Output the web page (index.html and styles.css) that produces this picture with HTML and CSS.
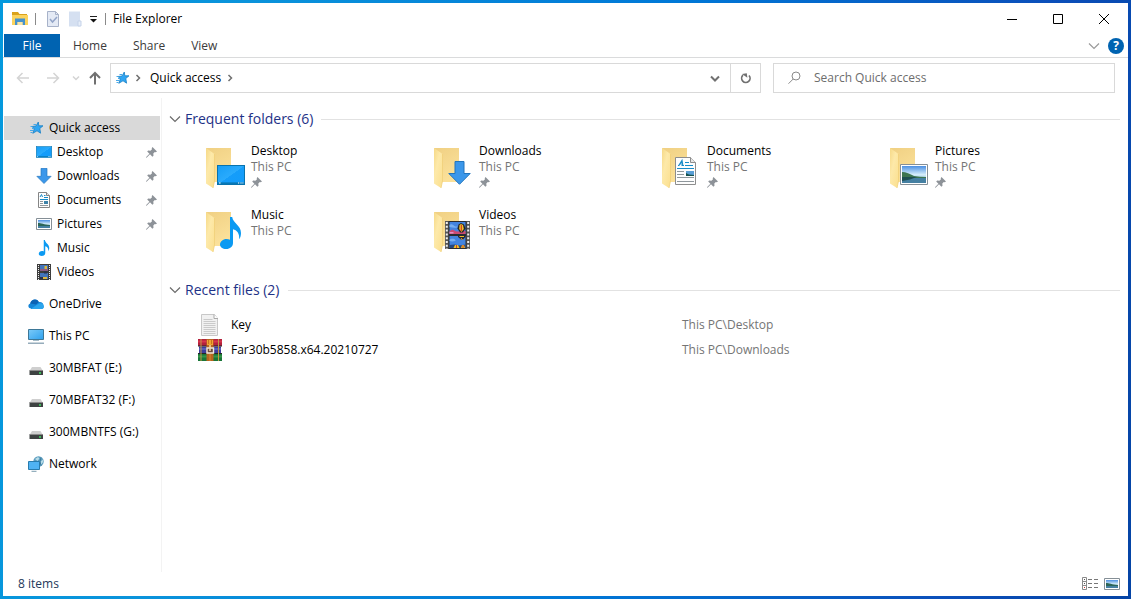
FILE: index.html
```
<!DOCTYPE html>
<html lang="en">
<head>
<meta charset="utf-8">
<title>File Explorer</title>
<link rel="stylesheet" href="styles.css">
</head>
<body>
<svg class="defs" aria-hidden="true">
  <defs>
    <linearGradient id="g-flap" x1="0" y1="0" x2="1" y2="1"><stop offset="0" stop-color="#f6d987"/><stop offset=".4" stop-color="#fde9a9"/><stop offset="1" stop-color="#fbdf8e"/></linearGradient>
    <linearGradient id="g-back" x1="0" y1="0" x2=".4" y2="1"><stop offset="0" stop-color="#f0d083"/><stop offset="1" stop-color="#fbe19a"/></linearGradient>
    <linearGradient id="g-desk" x1="0" y1="0" x2="1" y2="1"><stop offset="0" stop-color="#159df6"/><stop offset=".5" stop-color="#2aabfd"/><stop offset=".51" stop-color="#159dfa"/><stop offset="1" stop-color="#139cfb"/></linearGradient>
    <linearGradient id="g-sky" x1="0" y1="0" x2="0" y2="1"><stop offset="0" stop-color="#4b8fe2"/><stop offset=".5" stop-color="#d3ecfa"/><stop offset="1" stop-color="#78b5d4"/></linearGradient>
    <linearGradient id="g-screen" x1="0" y1="0" x2="1" y2="1"><stop offset="0" stop-color="#7ccbf8"/><stop offset="1" stop-color="#2da0ee"/></linearGradient>
    <symbol id="desktop" viewBox="0 0 28 20"><rect x=".5" y=".5" width="27" height="19" fill="url(#g-desk)" stroke="#0873ae"/><path d="M1 18.2h26" stroke="#0877b5" stroke-width="1.6"/><path d="M2 18h1.6M21 18h1.2M23.4 18h1.2M25.4 18h1" stroke="#fff" stroke-width="1.2"/></symbol>
    <symbol id="down" viewBox="0 0 23 24"><path d="M7 .5h9v12h6.2L11.500 23.300.8 12.500H7z" fill="#3b97ea" stroke="#2275bd"/></symbol>
    <symbol id="music" viewBox="0 0 21 32"><path d="M10 0h2.200c.8 6.500 8.800 8 8.800 16 0 2.500-.6 4.600-1.800 6.300.5-6-2.400-9.200-6.200-10V26c0 3.500-3 6-6.800 6C2.500 32 0 30.200 0 27.500 0 24.500 3 22 6.500 22c1.400 0 2.600.3 3.500.8z" fill="#0b9af2"/></symbol>
    <symbol id="film" viewBox="0 0 25 28"><path d="M0 0h25v28H0z" fill="#555"/><path d="M3.500 0h18v28h-18z" fill="#2b2d30"/><path d="M1.800 1v27M23.200 1v27" stroke="#eee" stroke-width="2" stroke-dasharray="2 1.800"/><path d="M4.500 1h16v12h-16zM4.500 15h16v12h-16z" fill="#4384df"/><path d="M4.500 4c2-2 4 0 5 1s3 0 3 1-5 1-8 0zM4.500 19c2-2 5-1 6 0s-3 2-6 1z" fill="#77aef0"/><path d="M4.500 10l3-1.500 4 2 9-.5v3h-16z" fill="#cb4b73"/><path d="M4.500 11h4v1.500h-4z" fill="#e390c5"/><path d="M13.500 3.500L16 2l3 1.500 1.500 4-2.500 4h-3l-2.500-4z" fill="#232629"/><path d="M14.500 4L16 3l2 1 .8 4-2.300 3-2.300-3z" fill="#f2c22d"/><path d="M16.300 4v6" stroke="#cf2b20"/><path d="M13 14h7.500v2l-2.500 2.500h-2L13 16z" fill="#242735"/><path d="M14.500 15.500h4.500" stroke="#f1c126"/><path d="M16 17l1.500 2" stroke="#ee9b22"/><path d="M4.500 24l5-.5 5 1 6-1V27h-16z" fill="#27477e"/><path d="M8.500 27l1.500-3h3l1.500 3zM16 27l1-3h2l1 3z" fill="#f1c126"/><path d="M11.500 24v3M18 24v3" stroke="#c94429"/></symbol>
    <symbol id="film-small" viewBox="0 0 16 16"><path d="M1 0h14v16H1z" fill="#3d3d3d"/><path d="M2.500 1v15M13.500 1v15" stroke="#f0f0f0" stroke-dasharray="1 1"/><path d="M4 1h8v6H4zM4 9h8v6H4z" fill="#4374bb"/><path d="M4 5h8v2H4z" fill="#8a5a85"/><path d="M8.500 2h2.500v3H8.500zM7 13h4v2H7z" fill="#dcb640"/><path d="M8 7.500h3v2H8zM4 13h3v2H4z" fill="#29324b"/></symbol>
    <symbol id="document" viewBox="0 0 21 28"><path d="M.5.500h15l5 5v22H.500z" fill="#fdfdfd" stroke="#8d8d8d"/><path d="M15.500.500v5h5" fill="#e6e6e6" stroke="#8d8d8d"/><path d="M3 8.500h1.500M6.500 8.500H9M3.800 8.500L7 3.500l.8 5M5 7h2.500" fill="none" stroke="#178bc8" stroke-width="1.200"/><path d="M10 5.500h4M10 8.500h8M2 11.500h17" stroke="#178bc8"/><path d="M2 14.500h7M2 17.500h7M2 20.500h17M2 24.500h17" stroke="#8f979c"/><path d="M11 14h8v5h-8z" fill="#5a9fd6"/><path d="M11 19v-3l3 1.500 5 .5v1z" fill="#17524e"/></symbol>
    <symbol id="document-small" viewBox="0 0 16 16"><path d="M2.500.500h8l3 3v12h-11z" fill="#fdfdfd" stroke="#858585"/><path d="M10.500.500v3h3" fill="#e6e6e6" stroke="#858585"/><path d="M4 5l1.500-2.500L6.500 5M8 3.500h1.500M8 5.500h4M4 7.500h8" fill="none" stroke="#178bc8"/><path d="M4 9.500h3M4 11.500h3M4 13.500h8" stroke="#8f979c"/><path d="M8 9h4v3H8z" fill="#3c82a8"/></symbol>
    <symbol id="picture" viewBox="0 0 28 21"><path d="M.5.500h27v20H.500z" fill="#fff" stroke="#858f96"/><path d="M2 2h24v17H2z" fill="url(#g-sky)"/><path d="M2 8c4 0 8 2 12 4 4 .5 8 1 12 1v1H2z" fill="#3c7550"/><path d="M2 14h24v5H2z" fill="#4580a2"/><path d="M2 13h15l-7 2.500L2 17z" fill="#1d4f52"/></symbol>
    <symbol id="picture-small" viewBox="0 0 16 16"><path d="M.5 2.500h15v11H.500z" fill="#fff" stroke="#858f96"/><path d="M2 4h12v8H2z" fill="url(#g-sky)"/><path d="M2 7c3 0 6 1.500 12 2v1H2z" fill="#2c6658"/><path d="M2 10h12v2H2z" fill="#4580a2"/></symbol>
    <symbol id="folder" viewBox="0 0 42 42"><path d="M1 1h25v34H9z" fill="url(#g-back)"/><path d="M1 1l8.500 6v27L8 41 1 36.500z" fill="url(#g-flap)"/><path d="M9.500 7v27L8 41" fill="none" stroke="#f0cf78" stroke-width=".8"/></symbol>
    <symbol id="pin" viewBox="0 0 11 11"><path d="M6.500 0L11 4.500 9.700 5.300 8.800 5 7.300 6.600 7.500 8.700 6.400 9.700 4 7.300.6 10.800 0 10.500.2 9.900 3.400 6.800 1.200 4.500 2.200 3.500 4.400 3.700 6 2.200 5.700 1.200z" fill="#8d9298"/></symbol>
    <symbol id="star" viewBox="0 0 16 16"><path d="M10.300 2l.5 3.800h4.200L11.800 8.500l.8 4.700-3.600-2.400-4.200 2.500 1.500-4.500L4 6.500l4-.5z" fill="#2fa5f2" stroke="#1a80c4" stroke-width=".8"/><path d="M5.500 4.500H8M2.500 6.500h2M4 8.500h2M2 10.500h3M2.500 12.500h2" stroke="#48a8e8"/></symbol>
    <symbol id="cloud" viewBox="0 0 16 16"><path d="M3 12.500C0 12.500-.6 8.800 2.200 7.600 3.200 3 9 2 10.800 6c3-.5 4.700 1.300 4.600 3.500C16.400 11 15.500 13 13.500 13H3z" fill="#1485d8"/><path d="M2.200 7.600C3.200 3 9 2 10.800 6L8 8.500z" fill="#0b62b4"/><path d="M3 12.700L11 7.500c3-1 5 .8 4.700 3.200-.2 1.300-1 2.300-2.200 2.300H3.800z" fill="#2ba5ed"/></symbol>
    <symbol id="pc" viewBox="0 0 16 16"><path d="M.5 1.500h15v10H.500z" fill="url(#g-screen)" stroke="#3d7797"/><path d="M5 12.500h6" stroke="#a7bdc9"/><path d="M0 15.200h16" stroke="#7c98aa" stroke-width="1.200"/></symbol>
    <symbol id="drive" viewBox="0 0 16 16"><path d="M4 7h8.500L15 11H1.500z" fill="#cfcfcf"/><path d="M1.500 10.500h13.500v4.500H1.500z" fill="#3e4242"/><path d="M1.500 10.500h13.500" stroke="#8b8b8b"/><path d="M11 13h2" stroke="#3fe063" stroke-width="1.600"/></symbol>
    <symbol id="network" viewBox="0 0 16 16"><circle cx="10.500" cy="5.500" r="5.200" fill="#5b9dbf"/><path d="M7 3l3-2 1.500 1.500-2 2.500zM12.500 6l2-2.500.8 2-1.800 3z" fill="#b8dce8"/><path d="M13 1.500l-1 4 1 4" fill="none" stroke="#3f7c9c"/><path d="M.5 5.500h11v8H.500z" fill="#4fb3f4" stroke="#287cae"/><path d="M3.500 15.300h5" stroke="#7a9bad"/></symbol>
    <symbol id="chev" viewBox="0 0 12 12"><path d="M1 3.500l5 5 5-5" fill="none" stroke="currentColor" stroke-width="1.200"/></symbol>
    <symbol id="caret" viewBox="0 0 12 12"><path d="M2 4.500l4 4 4-4" fill="none" stroke="currentColor" stroke-width="2"/></symbol>
    <symbol id="next" viewBox="0 0 12 12"><path d="M4.500 3l3 3-3 3" fill="none" stroke="currentColor" stroke-width="1.500"/></symbol>
  </defs>
</svg>

<div class="window">
  <header class="titlebar">
    <svg class="i16" viewBox="0 0 16 16" aria-hidden="true"><path d="M0 1h6l1.500 2H15v3H0z" fill="#daa21c"/><path d="M0 4h16v10H0z" fill="#fbd35e"/><path d="M3 14V7.500h10V14h-2.500v-3h-5v3z" fill="#4592cd"/><path d="M5.500 14v-3h5v3z" fill="#f8e5a9"/></svg>
    <span class="divider"></span>
    <button class="tool tool-first" aria-label="Properties"><svg class="i16" viewBox="0 0 16 16"><path d="M2.500.500h8l3 3v12h-11z" fill="#e4eaf5" stroke="#a7b2c9"/><path d="M10.500.500v3h3" fill="none" stroke="#a7b2c9"/><path d="M5 8l2.500 3L12 6" fill="none" stroke="#93a5c8" stroke-width="1.500"/></svg></button>
    <button class="tool" aria-label="New folder"><svg class="i16" viewBox="0 0 16 16"><path d="M2 .5h11v15H2z" fill="#d5e0f1"/><path d="M11 10h3v5h-3z" fill="#e7eef9" stroke="#c5d3e9"/></svg></button>
    <button class="tool tool-small" aria-label="Customize toolbar"><svg class="i8" viewBox="0 0 8 8"><path d="M0 1.500h7" stroke="#222"/><path d="M0 4h7L3.500 7.500z" fill="#111"/></svg></button>
    <span class="divider"></span>
    <h1 class="title">File Explorer</h1>
    <div class="controls">
      <button class="control" aria-label="Minimize"><svg class="i12" viewBox="0 0 12 12"><path d="M1 6.500h10" stroke="#000"/></svg></button>
      <button class="control" aria-label="Maximize"><svg class="i12" viewBox="0 0 12 12"><path d="M1.500 1.500h9v9h-9z" fill="none" stroke="#000"/></svg></button>
      <button class="control" aria-label="Close"><svg class="i12" viewBox="0 0 12 12"><path d="M1 1l10 10M11 1L1 11" stroke="#000"/></svg></button>
    </div>
  </header>

  <div class="ribbon">
    <button class="tab tab-file">File</button>
    <button class="tab">Home</button>
    <button class="tab">Share</button>
    <button class="tab">View</button>
    <div class="ribbon-end">
      <button class="plain pale" aria-label="Expand the ribbon"><svg class="i12"><use href="#chev"/></svg></button>
      <button class="help" aria-label="Help">?</button>
    </div>
  </div>

  <div class="navbar">
    <div class="history">
      <button class="plain off" aria-label="Back"><svg class="i14" viewBox="0 0 14 14"><path d="M13 7H1.500M6.500 2l-5 5 5 5" fill="none" stroke="currentColor" stroke-width="1.500"/></svg></button>
      <button class="plain off" aria-label="Forward"><svg class="i14" viewBox="0 0 14 14"><path d="M1 7h11.500M7.500 2l5 5-5 5" fill="none" stroke="currentColor" stroke-width="1.500"/></svg></button>
      <button class="plain off history-drop" aria-label="Recent locations"><svg class="i8" viewBox="0 0 8 8"><path d="M1 2.500l3 3 3-3" fill="none" stroke="currentColor" stroke-width="1.500"/></svg></button>
      <button class="plain" aria-label="Up"><svg class="i14" viewBox="0 0 14 14"><path d="M7 13.500V2M2 7l5-5 5 5" fill="none" stroke="currentColor" stroke-width="2"/></svg></button>
    </div>
    <div class="address">
      <svg class="i16" aria-hidden="true"><use href="#star"/></svg>
      <svg class="i12" aria-hidden="true"><use href="#next"/></svg>
      <a class="crumb" href="#">Quick access</a>
      <svg class="i12" aria-hidden="true"><use href="#next"/></svg>
      <button class="plain address-drop" aria-label="Previous locations"><svg class="i12"><use href="#caret"/></svg></button>
      <button class="plain refresh" aria-label="Refresh"><svg class="i14" viewBox="0 0 14 14"><path d="M4 4.200a4.200 4.200 0 1 0 6 .3" fill="none" stroke="currentColor" stroke-width="1.700"/><path d="M3.200 2.500H8V7z" fill="currentColor" transform="rotate(-8 6 4)"/></svg></button>
    </div>
    <div class="search">
      <svg class="i14" viewBox="0 0 14 14" aria-hidden="true"><circle cx="8" cy="5" r="4" fill="none" stroke="#8a8a8a"/><path d="M5.200 8L.5 12.700" stroke="#8a8a8a"/></svg>
      <input class="search-input" type="text" aria-label="Search Quick access" placeholder="Search Quick access">
    </div>
  </div>

  <div class="body">
    <nav class="sidebar" aria-label="Folders">
      <a class="node selected" href="#"><svg class="i16"><use href="#star"/></svg>Quick access</a>
      <a class="node child" href="#"><svg class="i16"><use href="#desktop"/></svg>Desktop<svg class="pin"><use href="#pin"/></svg></a>
      <a class="node child" href="#"><svg class="i16"><use href="#down"/></svg>Downloads<svg class="pin"><use href="#pin"/></svg></a>
      <a class="node child" href="#"><svg class="i16"><use href="#document-small"/></svg>Documents<svg class="pin"><use href="#pin"/></svg></a>
      <a class="node child" href="#"><svg class="i16"><use href="#picture-small"/></svg>Pictures<svg class="pin"><use href="#pin"/></svg></a>
      <a class="node child" href="#"><svg class="i16"><use href="#music"/></svg>Music</a>
      <a class="node child" href="#"><svg class="i16"><use href="#film-small"/></svg>Videos</a>
      <a class="node root" href="#"><svg class="i16"><use href="#cloud"/></svg>OneDrive</a>
      <a class="node root" href="#"><svg class="i16"><use href="#pc"/></svg>This PC</a>
      <a class="node root" href="#"><svg class="i16"><use href="#drive"/></svg>30MBFAT (E:)</a>
      <a class="node root" href="#"><svg class="i16"><use href="#drive"/></svg>70MBFAT32 (F:)</a>
      <a class="node root" href="#"><svg class="i16"><use href="#drive"/></svg>300MBNTFS (G:)</a>
      <a class="node root" href="#"><svg class="i16"><use href="#network"/></svg>Network</a>
    </nav>

    <main class="content">
      <section class="group">
        <h2 class="group-head"><svg class="i12"><use href="#chev"/></svg>Frequent folders (6)</h2>
        <div class="tiles">
          <a class="tile" href="#"><svg class="tile-icon" viewBox="0 0 42 42"><use href="#folder" width="42" height="42"/><use href="#desktop" x="12" y="18" width="28" height="20"/></svg><span class="tile-text"><span>Desktop</span><span class="muted">This PC</span><svg class="pin"><use href="#pin"/></svg></span></a>
          <a class="tile" href="#"><svg class="tile-icon" viewBox="0 0 42 42"><use href="#folder" width="42" height="42"/><use href="#down" x="15" y="14" width="23" height="24"/></svg><span class="tile-text"><span>Downloads</span><span class="muted">This PC</span><svg class="pin"><use href="#pin"/></svg></span></a>
          <a class="tile" href="#"><svg class="tile-icon" viewBox="0 0 42 42"><use href="#folder" width="42" height="42"/><use href="#document" x="14" y="10" width="21" height="28"/></svg><span class="tile-text"><span>Documents</span><span class="muted">This PC</span><svg class="pin"><use href="#pin"/></svg></span></a>
          <a class="tile" href="#"><svg class="tile-icon" viewBox="0 0 42 42"><use href="#folder" width="42" height="42"/><use href="#picture" x="11" y="17" width="28" height="21"/></svg><span class="tile-text"><span>Pictures</span><span class="muted">This PC</span><svg class="pin"><use href="#pin"/></svg></span></a>
          <a class="tile" href="#"><svg class="tile-icon" viewBox="0 0 42 42"><use href="#folder" width="42" height="42"/><use href="#music" x="15" y="6" width="21" height="32"/></svg><span class="tile-text"><span>Music</span><span class="muted">This PC</span></span></a>
          <a class="tile" href="#"><svg class="tile-icon" viewBox="0 0 42 42"><use href="#folder" width="42" height="42"/><use href="#film" x="12" y="10" width="25" height="28"/></svg><span class="tile-text"><span>Videos</span><span class="muted">This PC</span></span></a>
        </div>
      </section>

      <section class="group">
        <h2 class="group-head"><svg class="i12"><use href="#chev"/></svg>Recent files (2)</h2>
        <table class="files">
          <tbody>
            <tr>
              <td class="file-icon"><svg class="i24" viewBox="0 0 24 24" aria-hidden="true"><path d="M3.500 1.500h13l3 4v17h-16z" fill="#f1f1f1" stroke="#c8c8c8"/><path d="M16 1.500v4h4" fill="#fff" stroke="#a9a9a9"/><path d="M5.500 6.500h9M5.500 8.500h12M5.500 10.500h12M5.500 12.500h12M5.500 14.500h12M5.500 16.500h12M5.500 18.500h12M5.500 20.500h12" stroke="#cacaca"/></svg></td>
              <td class="file-name">Key</td>
              <td class="muted">This PC\Desktop</td>
            </tr>
            <tr>
              <td class="file-icon"><svg class="i24" viewBox="0 0 24 24" aria-hidden="true"><path d="M0 1h24v7H0z" fill="#b3213c"/><path d="M0 3.500h24" stroke="#d8354d" stroke-width="2"/><path d="M1 8.500h22v7H1z" fill="#3d3d9b"/><path d="M1 11h22" stroke="#565cb8" stroke-width="2"/><path d="M0 16h24v7H0z" fill="#187638"/><path d="M0 18.500h24" stroke="#369548" stroke-width="2"/><path d="M0 8h24M0 15.500h24" stroke="#252525"/><path d="M3 1v22M20.500 1v22" stroke="#c29a44"/><path d="M8.500 1h7v22h-7z" fill="#b8651f"/><path d="M9 2h6v5H9z" fill="#f0a531"/><path d="M10.500 2v4M13.500 2v4" stroke="#c87420"/><path d="M12 16v7" stroke="#d98a35"/><path d="M9 10h6.500v5H9z" fill="#6e4937" stroke="#eee7dc" stroke-width="1.400"/><path d="M12 7v6" stroke="#f0d9ac" stroke-width="1.500"/></svg></td>
              <td class="file-name">Far30b5858.x64.20210727</td>
              <td class="muted">This PC\Downloads</td>
            </tr>
          </tbody>
        </table>
      </section>
    </main>
  </div>

  <footer class="status">
    <span class="status-count">8 items</span>
    <div class="views">
      <button class="plain" aria-label="Details view"><svg class="i16" viewBox="0 0 16 16"><path d="M.5 1.500h4v12h-4zM.5 5.500h4M.5 9.500h4" fill="#fff" stroke="#8a8a8a"/><path d="M2 3.500h1M2 7.500h1" stroke="#555"/><path d="M2 11.500h1" stroke="#c33"/><path d="M6 3.500h4M12 3.500h4M6 7.500h4M12 7.500h4M6 11.500h4M12 11.500h4" stroke="#777"/></svg></button>
      <button class="plain" aria-label="Large icons view"><svg class="i16"><use href="#picture-small"/></svg></button>
    </div>
  </footer>
</div>
</body>
</html>
```
FILE: styles.css
```
* { box-sizing: border-box; }

body {
  margin: 0;
  min-height: 100vh;
  padding: 3px;
  display: flex;
  background: linear-gradient(100deg, #0499dd 0%, #0a93db 20%, #0078d7 55%, #0b4fba 85%, #0544a5 100%);
  color: #000;
  font: 12px/16px "Open Sans", "Noto Sans", sans-serif;
}

button, input { font: inherit; color: inherit; border: 0; padding: 0; background: none; }
a { color: inherit; text-decoration: none; }
svg { display: block; flex: none; }

.defs { position: absolute; width: 0; height: 0; }
.i8 { width: 8px; height: 8px; }
.i12 { width: 12px; height: 12px; }
.i14 { width: 14px; height: 14px; }
.i16 { width: 16px; height: 16px; }
.i24 { width: 24px; height: 24px; }
.pin { width: 11px; height: 11px; }
.muted { color: #757575; }
.plain { display: flex; align-items: center; justify-content: center; color: #707070; }
.off { color: #d4d4d4; }
.pale { color: #9a9a9a; }

.window { flex: 1; display: flex; flex-direction: column; background: #fff; }

.titlebar { display: flex; align-items: center; height: 31px; padding: 0 1px 0 9px; }
.divider { width: 1px; height: 12px; margin: 0 7px; background: #8a8a8a; }
.tool { margin-right: 6px; }
.tool-first { margin-left: 2px; }
.tool-small { margin: 0 0 0 1px; }
.title { margin: 0; font-size: 12px; font-weight: 400; }
.controls { display: flex; align-self: stretch; margin-left: auto; }
.control { display: flex; align-items: center; justify-content: center; width: 46px; }

.ribbon { display: flex; height: 24px; padding-left: 1px; border-bottom: 1px solid #dadbdc; }
.tab { padding: 0 13px; color: #3b3b3b; }
.tab-file { width: 56px; background: #0063b1; color: #fff; }
.ribbon-end { display: flex; align-items: center; gap: 8px; margin-left: auto; padding-right: 4px; }
.help { width: 16px; height: 16px; border-radius: 50%; background: #0063b1; color: #fff; font-weight: 700; }

.navbar { display: flex; align-items: center; height: 40px; padding-right: 13px; }
.history { display: flex; align-items: center; gap: 16px; width: 107px; padding-left: 13px; }
.history-drop { margin: 0 -8px 0 -4px; }
.address { flex: 1; display: flex; align-items: center; height: 30px; padding-left: 3px; border: 1px solid #d9d9d9; color: #707070; }
.address > .i12 { margin: 0 3px; }
.address > .i16 + .i12 { margin: 0 6px 0 2px; }
.crumb { color: #000; }
.address-drop { width: 30px; height: 28px; margin-left: auto; }
.refresh { width: 30px; height: 28px; border-left: 1px solid #d9d9d9; }
.search { flex: 0 1 342px; display: flex; align-items: center; gap: 12px; height: 30px; margin-left: 12px; padding-left: 14px; border: 1px solid #d9d9d9; }
.search-input { flex: 1; min-width: 0; outline: 0; }
.search-input::placeholder { color: #6d6d6d; opacity: 1; }

.body { flex: 1; display: flex; }
.sidebar { width: 159px; padding: 18px 1px 0; border-right: 1px solid #f3f3f3; }
.node { display: flex; align-items: center; gap: 5px; height: 24px; padding: 0 3px 0 24px; white-space: nowrap; }
.child { padding-left: 32px; }
.root { margin-top: 8px; }
.selected { background: #d9d9d9; }
.node .pin { margin-left: auto; }

.content { flex: 1; padding: 10px 8px 0 7px; }
.group-head { display: flex; align-items: center; gap: 4px; margin: 0; font-size: 14px; font-weight: 400; line-height: 22px; color: #1e3287; }
.group-head .i12 { color: #6b6b6b; }
.group-head::after { content: ""; flex: 1; height: 1px; margin-left: 4px; background: #e2e2e2; }
.tiles { display: grid; grid-template-columns: repeat(auto-fill, 228px); grid-auto-rows: 64px; padding: 13px 0 0 36px; }
.tile { display: flex; gap: 4px; }
.tile-icon { width: 42px; height: 42px; margin-top: 4px; }
.tile-text { display: flex; flex-direction: column; }
.tile-text .pin { margin-top: 2px; }

.group + .group { margin-top: 8px; }
.files { width: 100%; margin-top: 11px; border-collapse: collapse; table-layout: fixed; }
.files td { height: 25px; padding: 0; }
.files .file-icon { width: 62px; padding-left: 29px; }
.files .file-name { width: 451px; }

.status { display: flex; align-items: center; height: 24px; padding: 0 8px 0 15px; color: #1e395b; }
.views { display: flex; align-items: center; gap: 6px; margin-left: auto; }
```
